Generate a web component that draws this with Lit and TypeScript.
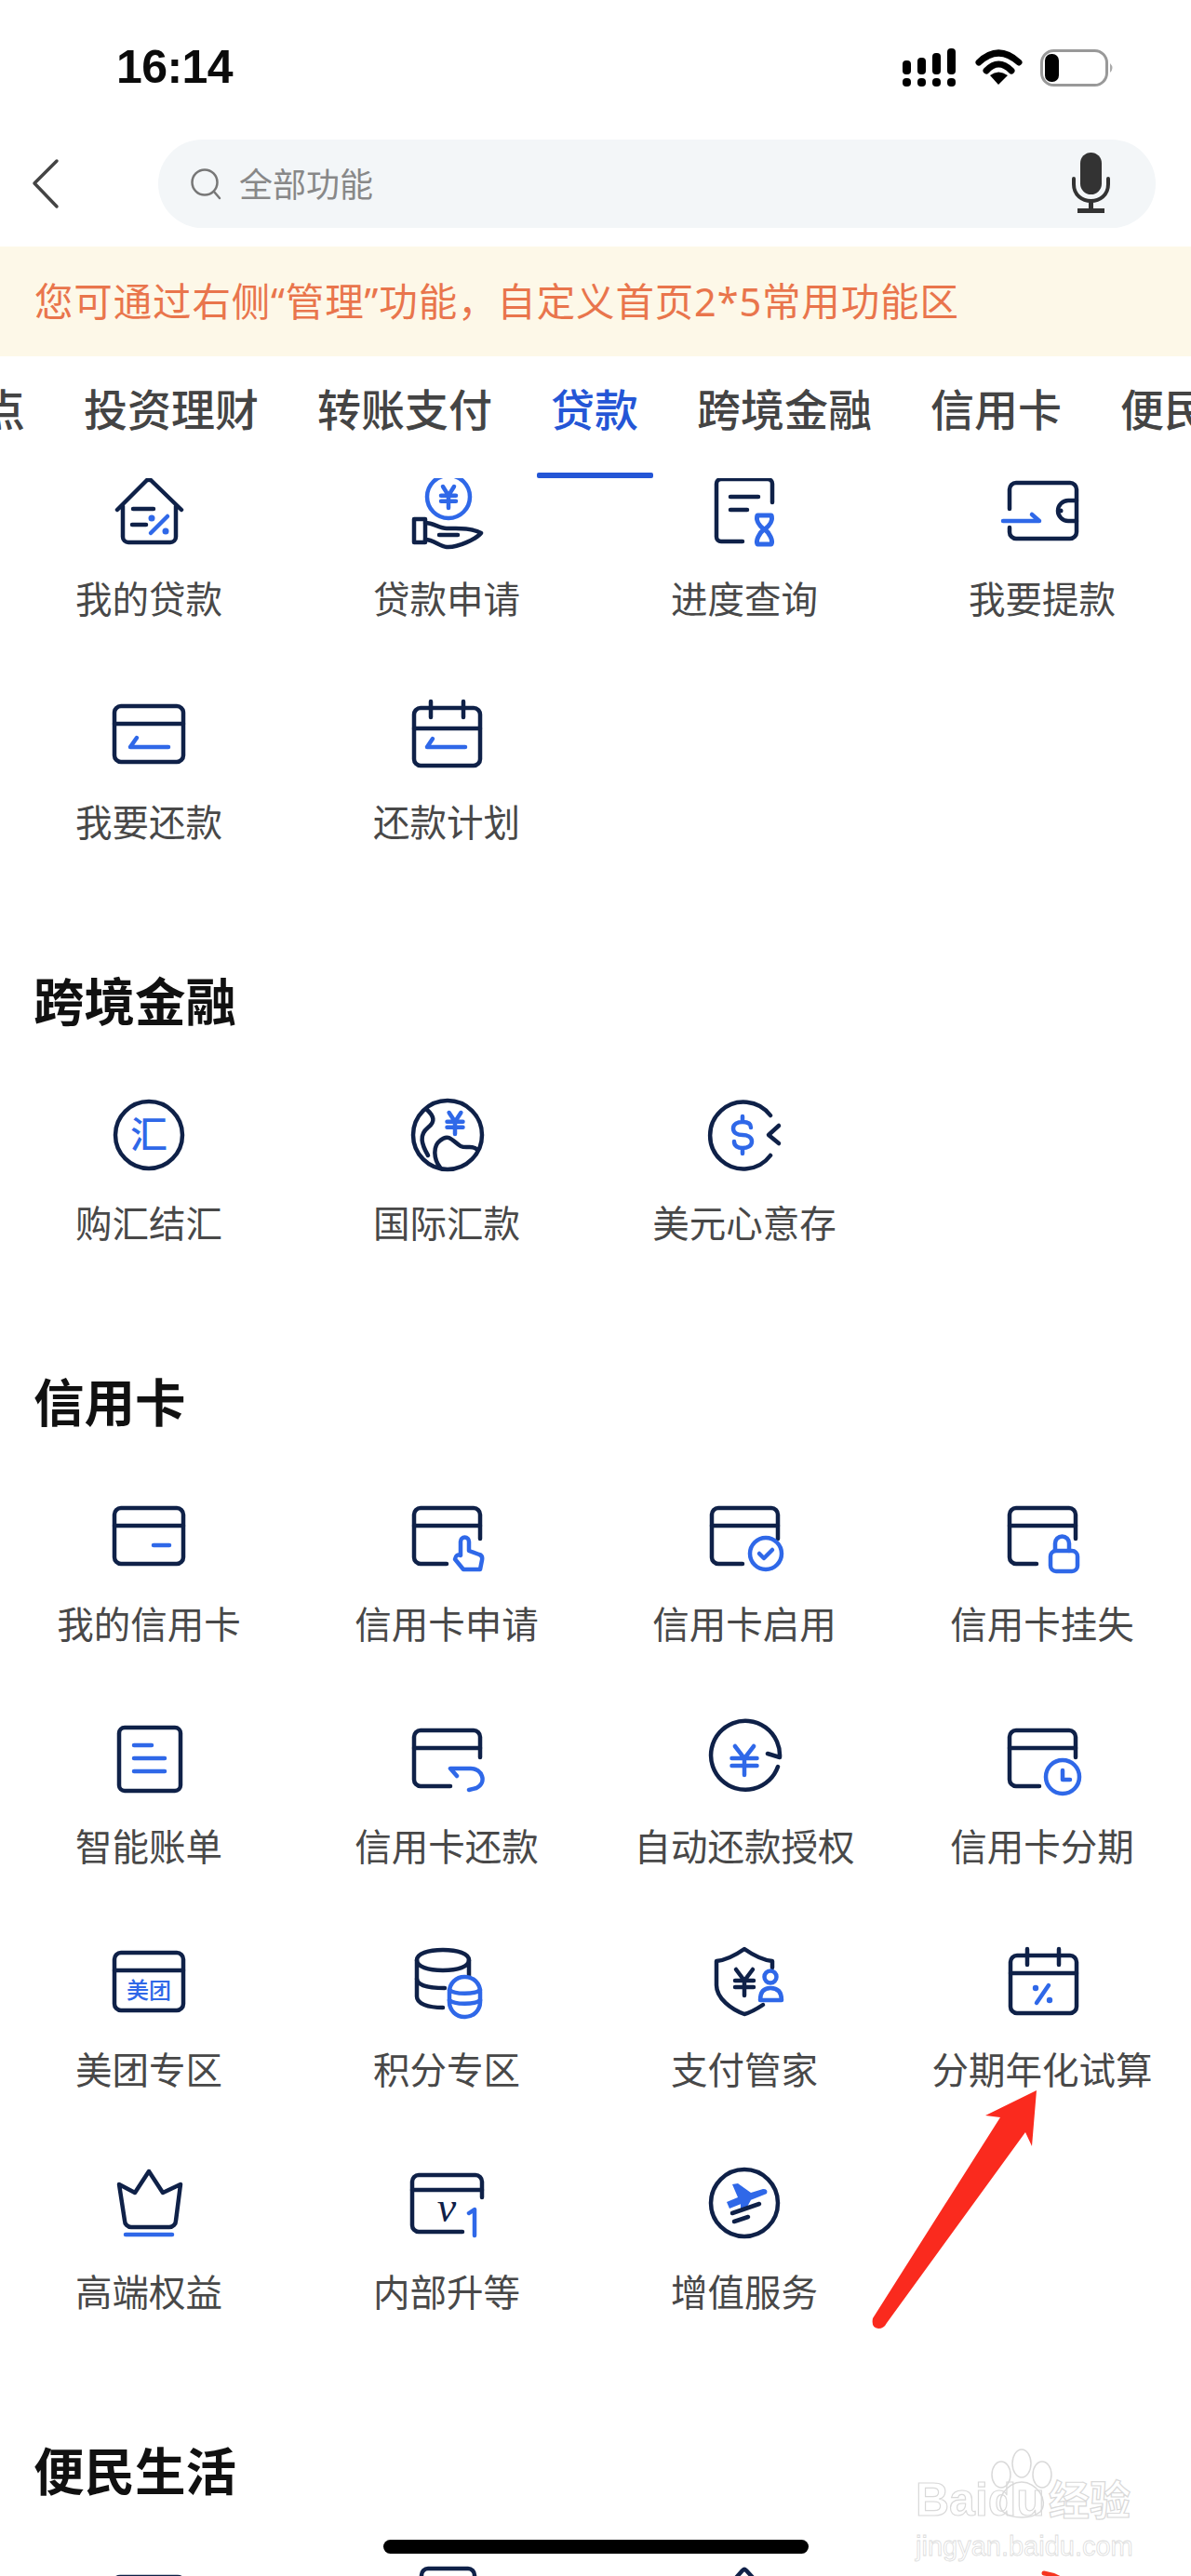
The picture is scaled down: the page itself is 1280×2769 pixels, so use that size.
import { LitElement, html, css, svg } from "lit";
import { customElement } from "lit/decorators.js";

const yen = (cx: number, t: number, w: number, h: number) => {
  const hw = w / 2;
  const mid = t + h * 0.42;
  const low = t + h * 0.68;
  return svg`<path class="b" d="M${cx - hw * 0.75} ${t} L${cx} ${mid} L${cx + hw * 0.75} ${t} M${cx - hw} ${mid} H${cx + hw} M${cx - hw} ${low} H${cx + hw} M${cx} ${mid} V${t + h}"/>`;
};

const fullCard = (tail: any) => svg`
  <rect x="3" y="10" width="74" height="60" rx="7"/>
  <path d="M3 29 H77"/>${tail}`;

const openCard = (endX: number, endY: number, tail: any) => svg`
  <path d="M76 ${endY} V17 a7 7 0 0 0 -7 -7 H12 a7 7 0 0 0 -7 7 V63 a7 7 0 0 0 7 7 H${endX}"/>
  <path d="M5 29 H76"/>${tail}`;

const icons: Record<string, any> = {
  house: svg`
    <path d="M6 39 L37 8 Q40 5 43 8 L75 39 M12 35 V68 a6 6 0 0 0 6 6 H63 a6 6 0 0 0 6 -6 V35"/>
    <path d="M23 38 H45 M22 55 H37"/>
    <path class="b" d="M42 64 L60 46"/>
    <circle class="bf" cx="43" cy="48" r="3.5"/><circle class="bf" cx="58" cy="62" r="3.5"/>`,
  hand: svg`
    <circle class="b" cx="42" cy="25" r="23"/>${yen(42, 14, 16, 23)}
    <path d="M17 49 H5 V74 H17 Z"/>
    <path d="M17 53 C26 53 32 59 40 59 H50 C60 59 70 60 77 64 C72 70 52 80 40 79 C32 78 26 71 17 71"/>
    <path d="M32 66 H52"/>`,
  progress: svg`
    <path d="M70 31 V11 a5 5 0 0 0 -5 -5 H15 a5 5 0 0 0 -5 5 V68 a5 5 0 0 0 5 5 H38"/>
    <path d="M25 25 H55 M25 39 H43"/>
    <path class="b thick" d="M54 45 H69 C71 50 67 56 62 60 C67 64 71 72 69 76 H54 C52 72 56 64 61 60 C56 56 52 50 54 45 Z"/>`,
  wallet: svg`
    <path d="M5 38 V17 a7 7 0 0 1 7 -7 H70 a7 7 0 0 1 7 7 V63 a7 7 0 0 1 -7 7 H12 a7 7 0 0 1 -7 -7 V58"/>
    <path d="M77 29 H68 a11 11 0 0 0 0 22 H77"/><circle class="nf" cx="60" cy="40" r="2.5"/>
    <path class="b" d="M-2 51 H37 L29 44"/>`,
  repay: fullCard(svg`<path class="b" d="M61 54 H20 L27 44"/>`),
  plan: svg`
    <rect x="5" y="12" width="71" height="62" rx="7"/><path d="M5 34 H76 M23 5 V22 M58 5 V22"/>
    <path class="b" d="M60 54 H19 L25 45"/>`,
  hui: svg`
    <circle cx="40" cy="40" r="36"/>
    <text class="tb thin" x="40" y="54" text-anchor="middle" font-size="40">汇</text>`,
  globe: svg`
    <circle cx="41" cy="40" r="37"/>
    <path d="M18 12 C27 20 28 26 20 32 C10 40 13 50 20 62"/>
    <path d="M33 75 C26 66 25 52 33 46 C42 38 46 46 55 52 C62 55 68 50 73 56"/>
    ${yen(49, 16, 17, 23)}`,
  usd: svg`
    <path d="M68 19 A36 36 0 1 0 68 62"/><path d="M77 30 L66 40 L77 49"/>
    <path class="b" d="M47 32 C47 27 43 26 38 26 C33 26 28 28 28 33 C28 38 33 40 38 40 C43 40 48 42 48 47 C48 52 43 54 38 54 C33 54 29 52 29 47 M38 20 V26 M38 54 V60"/>`,
  card: fullCard(svg`<path class="b" d="M45 50 H62"/>`),
  apply: openCard(40, 43, svg`<path class="b" d="M55 61 V46 a4.500 4.500 0 0 1 9 0 V56 L75 60 Q79 61 78 66 L76 76 H58 L49 65 Q50 59 55 61 Z"/>`),
  enable: openCard(38, 43, svg`<circle class="b" cx="63" cy="59" r="17"/><path class="b" d="M56 59 L61 64 L70 55"/>`),
  lock: openCard(34, 43, svg`<rect class="b" x="49" y="56" width="29" height="22" rx="6"/><path class="b" d="M54 56 V48 a7.500 7.500 0 0 1 15 0 V56"/>`),
  bill: svg`
    <rect x="8" y="7" width="66" height="68" rx="6"/>
    <path class="b" d="M24 26 H43 M24 40 H57 M24 54 H57"/>`,
  back: openCard(44, 39, svg`<path class="b" d="M51 59 L44 51 H66 C78 51 84 66 72 72 L64 74"/>`),
  auto: svg`
    <path d="M76 49 A37 37 0 1 1 78 39 L65 35"/>
    ${yen(40, 27, 27, 31)}`,
  clock: openCard(37, 39, svg`<circle class="b" cx="62" cy="60" r="18"/><path class="b" d="M62 53 V63 H70"/>`),
  meituan: svg`
    <rect x="3" y="9" width="74" height="62" rx="7"/><path d="M3 28 H77"/>
    <text class="tb thin" x="40" y="58" text-anchor="middle" font-size="24">美团</text>`,
  db: svg`
    <path d="M36 68 C20 68 8 64 8 56 V17 C8 10 20 6 36 6 C52 6 64 10 64 17 V36"/>
    <path d="M8 17 C8 24 20 28 36 28 C52 28 64 24 64 17 M8 37 C8 44 20 47 38 47"/>
    <rect class="w b" x="43" y="35" width="33" height="43" rx="16"/>
    <path class="b" d="M43 49 C48 54 71 54 76 49 M43 60 C48 65 71 65 76 60"/>`,
  shield: svg`
    <path d="M70 25 V18 C60 17 50 12 40 5 C30 12 20 17 10 18 V44 C10 58 26 70 40 75 C48 73 54 69 60 65"/>
    <path d="M31 27 L40 39 L49 27 M30 39 H50 M30 46 H50 M40 39 V55"/>
    <circle class="b" cx="68" cy="35" r="6.500"/>
    <path class="b" d="M57 60 Q57 47 68 47 Q80 47 80 60 Z"/>`,
  percent: svg`
    <rect x="6" y="12" width="71" height="62" rx="7"/><path d="M6 31 H77 M24 5 V22 M58 5 V22"/>
    <path class="b" d="M34 63 L47 44"/>
    <circle class="bf" cx="33" cy="47" r="3.2"/><circle class="bf" cx="48" cy="60" r="3.2"/>`,
  crown: svg`
    <path d="M8 19 L25 28 L40 5 L55 28 L74 19 L69 58 a7 7 0 0 1 -7 7 H21 a7 7 0 0 1 -7 -7 Z"/>
    <path class="b" d="M15 73 H65"/>`,
  v1: svg`
    <path d="M78 33 V16 a7 7 0 0 0 -7 -7 H10 a7 7 0 0 0 -7 7 V63 a7 7 0 0 0 7 7 H57"/>
    <path d="M3 25 H78"/>
    <text class="tn" x="40" y="59" text-anchor="middle" font-size="46">v</text>
    <path class="b" d="M64 50 L70 46 V74"/>`,
  plane: svg`
    <circle cx="40" cy="39" r="36"/>
    <path class="bf" d="M27 19 L33 18 L47 28 L60 24 Q66 24 64 29 L24 45 L21 38 L33 33 Z M36 39 L48 34 L42 45 L36 45 Z"/>
    <path d="M27 50 L56 40 M29 59 L44 54"/>`,
  r5a: svg`<rect x="2" y="10" width="76" height="60" rx="7"/>`,
  r5b: svg`<rect x="13" y="1" width="57" height="70" rx="7"/>`,
  r5c: svg`<path d="M6 39 L38 3 Q40 1 42 3 L75 39"/>`,
  r5d: svg`<path class="r" d="M42 6 Q55 8 64 15"/>`,
};

interface Item { i: string; t?: string }
const sections: { title?: string; items: Item[] }[] = [
  {
    items: [
      { i: "house", t: "我的贷款" }, { i: "hand", t: "贷款申请" }, { i: "progress", t: "进度查询" }, { i: "wallet", t: "我要提款" },
      { i: "repay", t: "我要还款" }, { i: "plan", t: "还款计划" },
    ],
  },
  {
    title: "跨境金融",
    items: [{ i: "hui", t: "购汇结汇" }, { i: "globe", t: "国际汇款" }, { i: "usd", t: "美元心意存" }],
  },
  {
    title: "信用卡",
    items: [
      { i: "card", t: "我的信用卡" }, { i: "apply", t: "信用卡申请" }, { i: "enable", t: "信用卡启用" }, { i: "lock", t: "信用卡挂失" },
      { i: "bill", t: "智能账单" }, { i: "back", t: "信用卡还款" }, { i: "auto", t: "自动还款授权" }, { i: "clock", t: "信用卡分期" },
      { i: "meituan", t: "美团专区" }, { i: "db", t: "积分专区" }, { i: "shield", t: "支付管家" }, { i: "percent", t: "分期年化试算" },
      { i: "crown", t: "高端权益" }, { i: "v1", t: "内部升等" }, { i: "plane", t: "增值服务" },
    ],
  },
  {
    title: "便民生活",
    items: [{ i: "r5a" }, { i: "r5b" }, { i: "r5c" }, { i: "r5d" }],
  },
];

const tabs = ["点", "投资理财", "转账支付", "贷款", "跨境金融", "信用卡", "便民生活"];

@customElement("app-root")
export class AppRoot extends LitElement {
  static styles = css`
    :host {
      display: block;
      position: relative;
      width: 1280px;
      height: 2769px;
      overflow: hidden;
      background: #fff;
      font-family: "Noto Sans CJK SC", "Liberation Sans", sans-serif;
    }
    .status {
      height: 144px;
      display: flex;
      align-items: center;
      justify-content: space-between;
      padding: 0 81px 0 125px;
    }
    .time {
      font: 700 50px "Liberation Sans", sans-serif;
      letter-spacing: -0.6px;
      color: #0b0b0b;
    }
    .status svg, .searchrow svg { display: block; }
    .searchrow {
      margin-top: 6px;
      height: 95px;
      display: flex;
      padding-left: 34px;
    }
    .back { margin-right: 106px; flex: none; }
    .search {
      width: 1072px;
      height: 95px;
      border-radius: 48px;
      background: #f3f6f8;
      display: flex;
      align-items: center;
      padding: 0 46px 0 34px;
      box-sizing: border-box;
    }
    .search .ph {
      margin: 0 0 3px 17px;
      font-size: 36px;
      line-height: 50px;
      color: #888;
      flex: 1;
    }
    .banner {
      margin-top: 20px;
      height: 118px;
      background: #fdf8e8;
      display: flex;
      align-items: center;
      padding: 0 0 5px 37px;
      box-sizing: border-box;
      font-family: "Noto Sans", "Noto Sans CJK SC", sans-serif;
      font-size: 41.5px;
      letter-spacing: 0.85px;
      color: #e9754c;
      white-space: nowrap;
    }
    .tabs {
      height: 131px;
      display: flex;
      gap: 63px;
      margin-left: -20px;
      padding-top: 25px;
      box-sizing: border-box;
      overflow: hidden;
      white-space: nowrap;
    }
    .tab {
      display: flex;
      flex-direction: column;
      align-items: center;
      flex: none;
      font-size: 47px;
      font-weight: 500;
      line-height: 60px;
      color: #444;
    }
    .tab::after {
      content: "";
      flex: none;
      width: 125px;
      height: 6px;
      margin: 40px -50px 0;
      border-radius: 2px;
      background: transparent;
    }
    .tab.on { color: #2456d6; }
    .tab.on::after { background: #2456d6; }
    .content { overflow: hidden; height: 2255px; }
    .section:first-child { margin-top: -5px; }
    h2 {
      margin: 137px 0 76px 36px;
      font-size: 54.5px;
      line-height: 60px;
      font-weight: 700;
      color: #111;
    }
    .grid {
      display: grid;
      grid-template-columns: repeat(4, 320px);
      row-gap: 81.5px;
    }
    .cell {
      display: flex;
      flex-direction: column;
      align-items: center;
      white-space: nowrap;
    }
    .icon {
      display: block;
      width: 80px;
      height: 80px;
      overflow: visible;
      fill: none;
      stroke: #0f2148;
      stroke-width: 4.5;
      stroke-linecap: round;
      stroke-linejoin: round;
    }
    .icon .b { stroke: #2f68e8; }
    .icon .w { fill: #fff; }
    .icon .thick { stroke-width: 5; }
    .icon .bf { fill: #2f68e8; stroke: none; }
    .icon .nf { fill: #0f2148; stroke: none; }
    .icon .r { stroke: #f5341f; stroke-width: 5; }
    .icon .tb { fill: #2f68e8; stroke: none; font-family: "Noto Sans CJK SC", sans-serif; }
    .icon .thin { font-weight: 500; }
    .icon .tn { fill: #0f2148; stroke: none; font-family: "Liberation Serif", serif; font-style: italic; }
    .label {
      margin-top: 28px;
      font-size: 39.5px;
      line-height: 50px;
      color: #484848;
    }
    .home {
      position: absolute;
      left: 412px;
      top: 2730px;
      width: 457px;
      height: 15px;
      border-radius: 8px;
      background: #000;
    }
    .arrow { position: absolute; left: 930px; top: 2240px; }
    .mark {
      position: absolute;
      left: 984px;
      top: 2630px;
      width: 230px;
      color: transparent;
      -webkit-text-stroke: 1.2px #d9d9d9;
      font-family: "Liberation Sans", sans-serif;
    }
    .mark .paw { position: absolute; left: 68px; top: 0; }
    .mark .brand {
      position: relative;
      margin-top: 30px;
      font-size: 50px;
      line-height: 50px;
      font-weight: 700;
      white-space: nowrap;
      display: flex;
      align-items: baseline;
    }
    .mark .cn { font-family: "Noto Sans CJK SC", sans-serif; font-size: 44px; margin-left: 4px; }
    .mark .url {
      margin-top: 10px;
      font-size: 29px;
      line-height: 30px;
      -webkit-text-stroke: 0.8px #dcdcdc;
      white-space: nowrap;
    }
  `;

  render() {
    return html`
      <div class="status">
        <span class="time">16:14</span>
        <svg width="230" height="44" viewBox="969 50 230 44" fill="#000">
          <rect x="970" y="65" width="9" height="15" rx="4"/><rect x="970" y="84" width="9" height="9" rx="4"/>
          <rect x="986" y="62" width="9" height="18" rx="4"/><rect x="986" y="84" width="9" height="9" rx="4"/>
          <rect x="1002" y="57" width="9" height="23" rx="4"/><rect x="1002" y="84" width="9" height="9" rx="4"/>
          <rect x="1018" y="52" width="9" height="28" rx="4"/><rect x="1018" y="84" width="9" height="9" rx="4"/>
          <path d="M1052 67 Q1073 47 1095 67 M1060 76 Q1073 62 1087 76" fill="none" stroke="#000" stroke-width="7" stroke-linecap="round"/>
          <path d="M1064 81 Q1073 74 1083 81 L1073 91 Z"/>
          <rect x="1119.500" y="54.500" width="70" height="37" rx="13" fill="#fff" stroke="#999" stroke-width="3"/>
          <rect x="1123" y="58" width="15" height="30" rx="7"/>
          <path d="M1193 68 Q1198 73 1193 78 Z" fill="#aaa"/>
        </svg>
      </div>
      <div class="searchrow">
        <svg class="back" width="30" height="95" viewBox="34 150 30 95" fill="none" stroke="#444" stroke-width="3.500" stroke-linecap="round" stroke-linejoin="round">
          <path d="M61 173 L37 197 L61 222"/>
        </svg>
        <div class="search">
          <svg width="36" height="36" viewBox="204 180 36 36" fill="none" stroke="#777" stroke-width="2.500" stroke-linecap="round">
            <circle cx="220" cy="196" r="13.500"/><path d="M230 206 L236 213"/>
          </svg>
          <span class="ph">全部功能</span>
          <svg width="46" height="95" viewBox="1150 150 46 95" fill="none" stroke="#333" stroke-width="4">
            <rect x="1161" y="164" width="23" height="45" rx="11.500" fill="#333" stroke="none"/>
            <path d="M1154 192 V198 C1154 222 1191 222 1191 198 V192" stroke-linecap="round"/>
            <path d="M1172.500 216 V226" stroke-width="5"/>
            <path d="M1158 226.500 H1187" stroke-width="5"/>
          </svg>
        </div>
      </div>
      <div class="banner">您可通过右侧“管理”功能，自定义首页2*5常用功能区</div>
      <div class="tabs">
        ${tabs.map((t) => html`<div class="tab ${t === "贷款" ? "on" : ""}">${t}</div>`)}
      </div>
      <div class="content">
        ${sections.map(
          (s) => html`<section class="section">
            ${s.title ? html`<h2>${s.title}</h2>` : ""}
            <div class="grid">
              ${s.items.map(
                (it) => html`<div class="cell">
                  <svg class="icon" viewBox="0 0 80 80">${icons[it.i]}</svg>
                  ${it.t ? html`<div class="label">${it.t}</div>` : ""}
                </div>`
              )}
            </div>
          </section>`
        )}
      </div>
      <svg class="arrow" width="190" height="270" viewBox="930 2240 190 270" fill="#fa2a1e">
        <path d="M1114 2247 L1059 2274 L1075 2276 L938 2492 Q936 2502 944 2503 Q950 2503 953 2497 L1102 2292 L1109 2307 Z"/>
      </svg>
      <div class="mark">
        <svg class="paw" width="90" height="80" viewBox="0 0 90 80" fill="#fff" stroke="#d9d9d9" stroke-width="1.500">
          <ellipse cx="24" cy="30" rx="10" ry="14"/><ellipse cx="46" cy="18" rx="10" ry="15"/><ellipse cx="68" cy="30" rx="10" ry="14"/>
          <path d="M46 38 C62 38 76 58 66 70 C56 78 36 78 26 70 C16 58 30 38 46 38 Z"/>
        </svg>
        <div class="brand"><span>Bai</span><span>du</span><span class="cn">经验</span></div>
        <div class="url">jingyan.baidu.com</div>
      </div>
      <div class="home"></div>
    `;
  }
}
